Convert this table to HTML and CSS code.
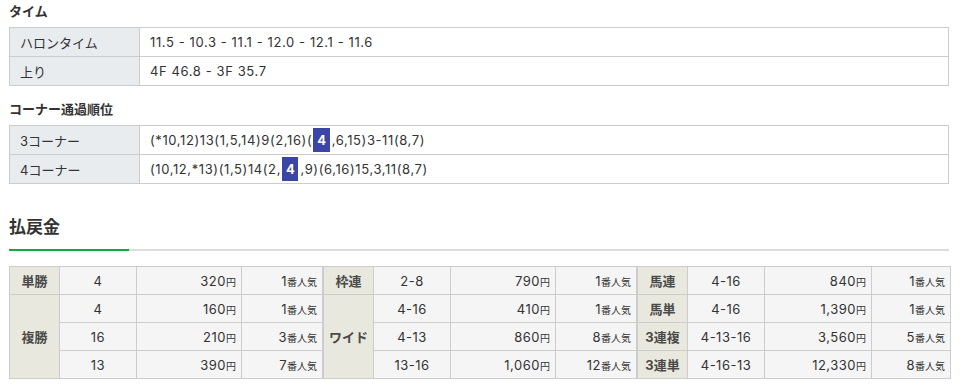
FILE: index.html
```html
<!DOCTYPE html>
<html lang="ja">
<head>
<meta charset="utf-8">
<link rel="stylesheet" href="styles.css">
</head>
<body>
<div class="page">
  <h3 class="sub">タイム</h3>
  <table class="info">
    <colgroup><col class="c-label"><col></colgroup>
    <tr><th>ハロンタイム</th><td>11.5 - 10.3 - 11.1 - 12.0 - 12.1 - 11.6</td></tr>
    <tr><th>上り</th><td>4F 46.8 - 3F 35.7</td></tr>
  </table>

  <h3 class="sub sub-2">コーナー通過順位</h3>
  <table class="info">
    <colgroup><col class="c-label"><col></colgroup>
    <tr><th>3コーナー</th><td>(*10,12)13(1,5,14)9(2,16)(<span class="hl">4</span>,6,15)3-11(8,7)</td></tr>
    <tr><th>4コーナー</th><td>(10,12,*13)(1,5)14(2,<span class="hl">4</span>,9)(6,16)15,3,11(8,7)</td></tr>
  </table>

  <h2 class="pay-title">払戻金</h2>

  <div class="pay">
    <table class="pt">
      <colgroup><col class="w-l"><col class="w-n"><col class="w-p"><col class="w-k"></colgroup>
      <tr><th>単勝</th><td class="num">4</td><td class="yen">320<small>円</small></td><td class="nk">1<small>番人気</small></td></tr>
      <tr><th rowspan="3">複勝</th><td class="num">4</td><td class="yen">160<small>円</small></td><td class="nk">1<small>番人気</small></td></tr>
      <tr class="dash"><td class="num">16</td><td class="yen">210<small>円</small></td><td class="nk">3<small>番人気</small></td></tr>
      <tr class="dash"><td class="num">13</td><td class="yen">390<small>円</small></td><td class="nk">7<small>番人気</small></td></tr>
    </table>
    <table class="pt">
      <colgroup><col class="w-l"><col class="w-n"><col class="w-p"><col class="w-k"></colgroup>
      <tr><th>枠連</th><td class="num">2-8</td><td class="yen">790<small>円</small></td><td class="nk">1<small>番人気</small></td></tr>
      <tr><th rowspan="3">ワイド</th><td class="num">4-16</td><td class="yen">410<small>円</small></td><td class="nk">1<small>番人気</small></td></tr>
      <tr class="dash"><td class="num">4-13</td><td class="yen">860<small>円</small></td><td class="nk">8<small>番人気</small></td></tr>
      <tr class="dash"><td class="num">13-16</td><td class="yen">1,060<small>円</small></td><td class="nk">12<small>番人気</small></td></tr>
    </table>
    <table class="pt">
      <colgroup><col class="w-l"><col class="w-n"><col class="w-p3"><col class="w-k3"></colgroup>
      <tr><th>馬連</th><td class="num">4-16</td><td class="yen">840<small>円</small></td><td class="nk">1<small>番人気</small></td></tr>
      <tr><th>馬単</th><td class="num">4-16</td><td class="yen">1,390<small>円</small></td><td class="nk">1<small>番人気</small></td></tr>
      <tr><th>3連複</th><td class="num">4-13-16</td><td class="yen">3,560<small>円</small></td><td class="nk">5<small>番人気</small></td></tr>
      <tr><th>3連単</th><td class="num">4-16-13</td><td class="yen">12,330<small>円</small></td><td class="nk">8<small>番人気</small></td></tr>
    </table>
  </div>
</div>
</body>
</html>
```

FILE: styles.css
```css
* { box-sizing: border-box; }
html, body { margin: 0; padding: 0; background: #fff; }
body {
  font-family: Inter, "Noto Sans CJK JP", sans-serif;
  font-size: 13px;
  color: #333;
}
.page {
  padding: 0 16px 0 9px;
}
.sub {
  margin: 1px 0 6px;
  font-size: 13px;
  line-height: 20px;
  font-weight: bold;
  color: #333;
}
.sub-2 { margin-top: 13px; }

.info {
  width: 940px;
  border-collapse: collapse;
  table-layout: fixed;
}
.info .c-label { width: 130px; }
.info th, .info td {
  border: 1px solid #ccc;
  height: 29px;
  padding: 0 10px;
  text-align: left;
  font-weight: normal;
  vertical-align: middle;
  white-space: nowrap;
}
.info td { letter-spacing: 0.6px; }
.info th { background: #e9ecef; }
.hl {
  display: inline-block;
  background: #3b45a5;
  color: #fff;
  font-weight: bold;
  padding: 0 3px 0 4px;
  line-height: 24px;
  margin: 0 2px 0 1px;
}

.pay-title {
  margin: 28px 0 15px;
  font-size: 17px;
  line-height: 30px;
  font-weight: bold;
  color: #333;
  padding-bottom: 7px;
  border-bottom: 2px solid #ddd;
  position: relative;
  width: 940px;
}
.pay-title::after {
  content: "";
  position: absolute;
  left: 0;
  bottom: -2px;
  width: 120px;
  height: 2px;
  background: #17a83a;
}

.pay {
  display: flex;
  width: 940px;
}
.pt {
  border-collapse: collapse;
  table-layout: fixed;
  border: 1px solid #ccc;
}
.pt:nth-child(1) { width: 314px; }
.pt:nth-child(2) { width: 314px; }
.pt:nth-child(3) { width: 312px; }
.pt .w-l { width: 50px; }
.pt .w-n { width: 77px; }
.pt .w-p { width: 105px; }
.pt .w-k { width: 81px; }
.pt .w-p3 { width: 107px; }
.pt .w-k3 { width: 79px; }
.pt th, .pt td {
  border: 1px solid #ccc;
  height: 28px;
  padding: 0 5px;
  vertical-align: middle;
  white-space: nowrap;
}
.pt td { letter-spacing: 0.5px; }
.pt small { letter-spacing: 0; }
.pt th {
  background: #e8e8de;
  font-weight: bold;
  font-size: 13px;
  text-align: center;
  color: #4a4a4a;
}
.pt td { background: #f5f5f5; }
.pt tr.dash td { border-top: 1px dashed #ccc; }
.pt td.num { text-align: center; }
.pt td.yen, .pt td.nk { text-align: right; }
.pt small { font-size: 10px; }
```
